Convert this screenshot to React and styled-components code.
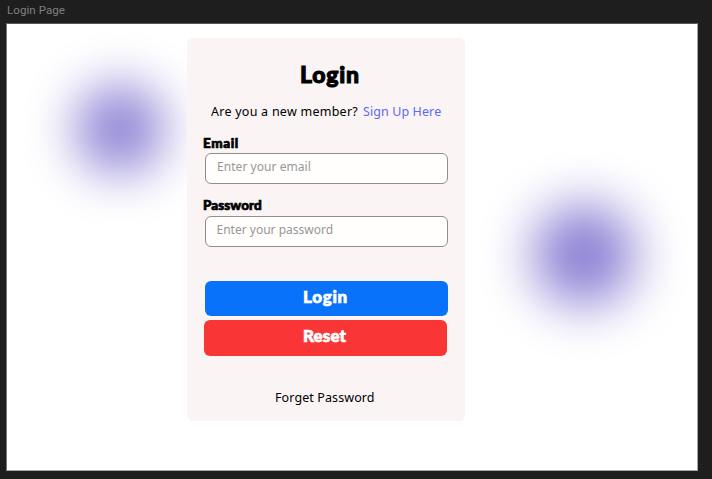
import React from "react";
import styled, { createGlobalStyle } from "styled-components";

const GlobalStyle = createGlobalStyle`
  * { box-sizing: border-box; }
  body { margin: 0; background: #1e1e1e; font-family: "Noto Sans", sans-serif; }
  h1, p { margin: 0; font: inherit; }
`;

const Canvas = styled.div`
  height: 479px;
  padding: 0 0 0 6px;
  background: #1e1e1e;
  overflow: hidden;
`;

const FrameName = styled.div`
  height: 23px;
  padding-left: 1px;
  color: #808080;
  font: 400 11.5px/21px Roboto, sans-serif;
  letter-spacing: 0.08px;
`;

const Artboard = styled.main`
  position: relative;
  width: 692px;
  height: 448px;
  padding: 14px 0 0 180px;
  border: 1px solid #a4a6a4;
  border-top-color: #555;
  border-left-color: #777;
  background: #fff;
  overflow: hidden;
`;

const Glow = styled.div`
  position: absolute;
  left: ${(p) => p.$x - p.$r}px;
  top: ${(p) => p.$y - p.$r}px;
  width: ${(p) => p.$r * 2}px;
  height: ${(p) => p.$r * 2}px;
  border-radius: 50%;
  opacity: ${(p) => p.$strength};
  background: #3926b5;
  filter: blur(${(p) => p.$blur}px);
`;

const Card = styled.form`
  position: relative;
  display: flex;
  flex-direction: column;
  width: 278px;
  height: 383px;
  padding: 21px 17px 0 16px;
  border-radius: 6px;
  background: #faf4f4;
`;

const Title = styled.h1`
  height: 30px;
  padding-left: 97px;
  color: #000;
  font-family: Lato, sans-serif;
  font-size: 23px;
  font-weight: 900;
  line-height: 30px;
  letter-spacing: 0.75px;
  white-space: nowrap;
  -webkit-text-stroke: 1px currentColor;
`;

const Prompt = styled.p`
  display: flex;
  gap: 5px;
  height: 20px;
  margin: 13px 0 12px;
  padding-left: 8px;
  color: #000;
  font-size: 12.5px;
  line-height: 20px;
  letter-spacing: 0.25px;
  white-space: nowrap;
`;

const SignUp = styled.a`
  color: #6168f5;
  letter-spacing: 0.1px;
`;

const Label = styled.label`
  height: 19px;
  color: #000;
  font-family: Lato, sans-serif;
  font-size: 13.5px;
  font-weight: 900;
  line-height: ${(p) => p.$line}px;
  letter-spacing: ${(p) => p.$spacing}px;
  white-space: nowrap;
  -webkit-text-stroke: 0.7px currentColor;
`;

const Field = styled.input`
  width: ${(p) => p.$width}px;
  height: 31px;
  margin: 0 0 ${(p) => p.$after}px ${(p) => p.$indent}px;
  padding: 0 11px 4px;
  border: 1px solid #918e8d;
  border-radius: 6px;
  outline: none;
  background: #fffefc;
  font: 400 12px "Noto Sans", sans-serif;
  letter-spacing: ${(p) => p.$spacing}px;
  &::placeholder { color: #979797; opacity: 1; }
`;

const Button = styled.button`
  width: 243px;
  height: 35.5px;
  margin: 0 0 4px ${(p) => p.$indent}px;
  padding: 0 0 3.5px ${(p) => p.$inset}px;
  border: 0;
  border-radius: 6px;
  background: ${(p) => p.$color};
  color: #fff;
  font: 900 17px/32px Lato, sans-serif;
  letter-spacing: ${(p) => p.$spacing}px;
  text-align: left;
  -webkit-text-stroke: 0.7px currentColor;
`;

const Forgot = styled.a`
  height: 20px;
  margin-top: 28px;
  padding-left: 72px;
  color: #000;
  font-size: 12.5px;
  line-height: 20px;
  letter-spacing: 0.1px;
  white-space: nowrap;
`;

export default function App() {
  return (
    <>
      <GlobalStyle />
      <Canvas>
        <FrameName>Login Page</FrameName>
        <Artboard>
          <Glow $x={113} $y={105} $r={45} $blur={25} $strength={0.56} />
          <Glow $x={577} $y={231} $r={51} $blur={26} $strength={0.59} />
          <Card>
            <Title>Login</Title>
            <Prompt>
              <span>Are you a new member?</span>
              <SignUp>Sign Up Here</SignUp>
            </Prompt>
            <Label htmlFor="email" $line={19} $spacing={0.6}>Email</Label>
            <Field id="email" type="email" placeholder="Enter your email"
              $width={242.5} $indent={2} $after={13} $spacing={0.05} />
            <Label htmlFor="password" $line={17} $spacing={0.05}>Password</Label>
            <Field id="password" type="password" placeholder="Enter your password"
              $width={243} $indent={1.5} $after={33.5} $spacing={0} />
            <Button type="button" $color="#0872fb" $indent={2} $inset={98} $spacing={0.7}>Login</Button>
            <Button type="reset" $color="#fa3535" $indent={1} $inset={99} $spacing={0.1}>Reset</Button>
            <Forgot>Forget Password</Forgot>
          </Card>
        </Artboard>
      </Canvas>
    </>
  );
}
